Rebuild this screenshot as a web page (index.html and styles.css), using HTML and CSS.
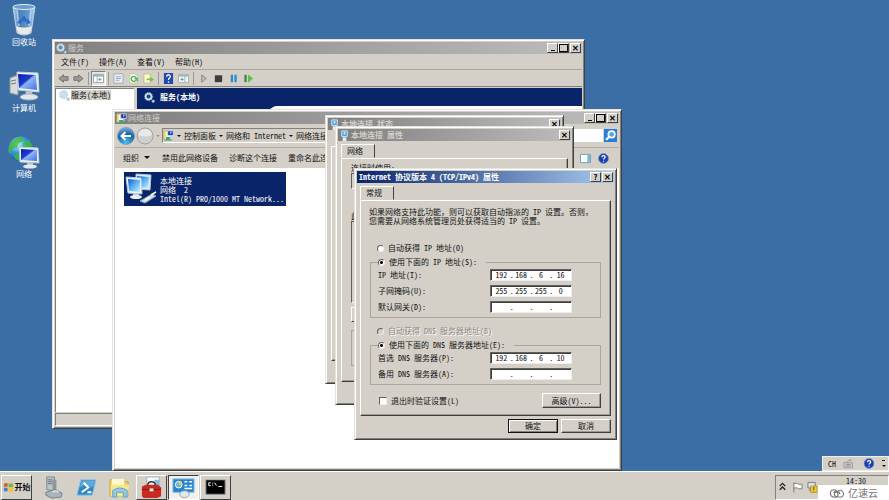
FILE: index.html
```html
<!DOCTYPE html>
<html lang="zh-CN">
<head>
<meta charset="utf-8">
<title>网络连接</title>
<link rel="stylesheet" href="styles.css">
</head>
<body>
<svg class="defs" aria-hidden="true">
  <defs>
    <linearGradient id="screen" x1="0" y1="0" x2="1" y2="1"><stop offset="0" stop-color="#0a1fa8"/><stop offset=".42" stop-color="#1c3cd0"/><stop offset=".5" stop-color="#8fb4f4"/><stop offset="1" stop-color="#3f70e0"/></linearGradient>
    <linearGradient id="sky" x1="0" y1="0" x2="1" y2="1"><stop offset="0" stop-color="#1757d0"/><stop offset=".5" stop-color="#5cb2f6"/><stop offset="1" stop-color="#c8ecff"/></linearGradient>
    <radialGradient id="globe" cx=".35" cy=".3" r=".8"><stop offset="0" stop-color="#d6f3ff"/><stop offset=".4" stop-color="#3f9fe0"/><stop offset="1" stop-color="#0c3f90"/></radialGradient>
    <radialGradient id="back" cx=".5" cy=".9" r=".9"><stop offset="0" stop-color="#49c4f0"/><stop offset=".6" stop-color="#1763ae"/><stop offset="1" stop-color="#7fb1da"/></radialGradient>
    <linearGradient id="bin" x1="0" y1="0" x2="1" y2="0"><stop offset="0" stop-color="#c9e0f2"/><stop offset=".3" stop-color="#4b84c0"/><stop offset=".7" stop-color="#6b9fd3"/><stop offset="1" stop-color="#d6e8f6"/></linearGradient>
    <symbol id="gear" viewBox="0 0 12 12"><circle cx="5" cy="5" r="3.2" fill="#5f8fb5" fill-opacity=".3" stroke="#c4dff2" stroke-width="2"/><circle cx="5" cy="5" r="4.500" fill="none" stroke="#9cc0dc" stroke-dasharray="1.4 1.3"/><circle cx="10" cy="10" r="1.3" fill="#fff" stroke="#7ca8cc"/></symbol>
    <symbol id="netfolder" viewBox="0 0 14 14"><path d="M1 1h7v11H1z" fill="#f3df82" stroke="#b59c45" stroke-width=".6"/><path d="M4 3h5v6H4z" fill="#fff"/><path d="M6 1h7v6H6z" fill="#1838a8" stroke="#cfdcea"/><path d="M9 2h3L9 6z" fill="#8fb5ff"/><path d="M4 9h5v3H4zM2 12h10v1.5H2z" fill="#3fa488"/><path d="M9 8h2v2H9z" fill="#ccd"/></symbol>
    <symbol id="plug" viewBox="0 0 10 12"><path d="M2 1h6v6H2z" fill="#4a9bd8" stroke="#d9efff"/><path d="M4 2h2v3H4z" fill="#c6f0ff"/><path d="M3 8h4v4H3z" fill="#e6eef4"/></symbol>
    <symbol id="help" viewBox="0 0 12 12"><circle cx="6" cy="6" r="5.4" fill="#1d3fae" stroke="#7b96cf" stroke-width=".8"/><path d="M4.2 4.6c0-2.4 3.8-2.3 3.6-.1C7.700 5.700 6 5.600 6 7.200M6 8.400v1.200" fill="none" stroke="#fff" stroke-width="1.300"/></symbol>
  </defs>
</svg>

<main class="desktop">
  <nav class="shortcuts">
    <a href="#bin" class="shortcut">
      <svg viewBox="0 0 32 34"><path d="M5 4l4 26q7 4 14 0l4-26z" fill="url(#bin)" fill-opacity=".85" stroke="#b8d2e8"/><path d="M8 23l2 7q6 3 12 0l2-7q-8 3-16 0z" fill="#ece9df"/><path d="M9 7l2 16M23 7l-2 16" stroke="#d7e9f7" stroke-width="1.500" opacity=".6"/><ellipse cx="16" cy="4" rx="11" ry="2.500" fill="#6d9bca" stroke="#e0edf6"/><path d="M13 18l3-5 3 5zM12 16l-2 4h4M20 16l2 4h-4" fill="#2b6cc9" stroke="#2b6cc9"/></svg>
      <span>回收站</span>
    </a>
    <a href="#computer" class="shortcut">
      <svg viewBox="0 0 32 34"><path d="M2 9l8-3v20l-8-2z" fill="#d8dbdd" stroke="#8f979e"/><path d="M3 12l5-1M3 15l5-1" stroke="#777"/><path d="M9 3l21 1 1 19-21-2z" fill="#e9f1f9" stroke="#c2cfdb"/><path d="M10 5l18 1 1 15-18-2z" fill="url(#screen)"/><path d="M18 22l6 1 1 4h-8z" fill="#bfc8d0"/><ellipse cx="21" cy="28" rx="9" ry="3" fill="#e3e7e9" stroke="#a9b1b8"/></svg>
      <span>计算机</span>
    </a>
    <a href="#network" class="shortcut">
      <svg viewBox="0 0 32 34"><circle cx="13" cy="14" r="12.500" fill="url(#globe)"/><path d="M2 9q4-7 12-7l2 4-5 2-2 5-5 1-2 5-2-3zM15 8l6-3 4 6-5 4-5-2zM6 20l8-2 3 5-4 4-6-3z" fill="#3fbd35" opacity=".8"/><path d="M11 12l19 1 1 15-19-1z" fill="#edf3fa" stroke="#b8c8d8"/><path d="M13 14l16 1v11l-16-1z" fill="url(#screen)"/><path d="M19 28h6v3h-6z" fill="#bcc5cc"/><ellipse cx="22" cy="31.500" rx="7" ry="2" fill="#e6e9eb"/></svg>
      <span>网络</span>
    </a>
  </nav>

  <section class="window services">
    <header class="titlebar"><svg class="ico"><use href="#gear"/></svg><span class="caption">服务</span>
      <button class="ctl min" aria-label="最小化"></button><button class="ctl max" aria-label="最大化"></button><button class="ctl close" aria-label="关闭">✕</button></header>
    <nav class="menubar"><button>文件(F)</button><button>操作(A)</button><button>查看(V)</button><button>帮助(H)</button></nav>
    <div class="toolbar">
      <button aria-label="后退"><svg viewBox="0 0 12 12"><path d="M1 6l5-4v2h5v4H6v2z" fill="#999" stroke="#707070"/></svg></button>
      <button aria-label="前进"><svg viewBox="0 0 12 12"><path d="M11 6L6 2v2H1v4h5v2z" fill="#999" stroke="#707070"/></svg></button>
      <i class="sep"></i>
      <button class="pressed" aria-label="显示树"><svg viewBox="0 0 12 12"><path d="M.5 1.500h11v9H.5z" fill="#fff" stroke="#8d9cab"/><path d="M1 2h10v2H1z" fill="#9fb3c8"/><path d="M4.500 4v6" stroke="#9aa"/><path d="M6 7h3M7.500 5.500v3" stroke="#3aa36b"/></svg></button>
      <i class="sep"></i>
      <button aria-label="属性"><svg viewBox="0 0 12 12"><path d="M1 1h10v10H1z" fill="#edf2f5" stroke="#9aa8b4"/><path d="M3 4h6M3 6h6M3 8h4" stroke="#8ea7bd"/></svg></button>
      <button aria-label="刷新"><svg viewBox="0 0 12 12"><path d="M2 1h6l2 2v8H2z" fill="#fff" stroke="#c4c49b"/><path d="M8.500 8A2.700 2.700 0 1 1 9 6M7 6.500h3V9" fill="none" stroke="#39ab43" stroke-width="1.400"/></svg></button>
      <button aria-label="导出"><svg viewBox="0 0 12 12"><path d="M1 1h7v10H1z" fill="#fdf9d5" stroke="#c7bb83"/><path d="M4 6h4V4l4 3-4 3V8H4z" fill="#75c83c"/></svg></button>
      <i class="sep"></i>
      <button aria-label="帮助"><svg viewBox="0 0 12 12"><path d="M1 0h10v12H1z" fill="#2348b3"/><path d="M4 4c0-3 4-2.500 4-.2C8 5.500 6 5.500 6 7.500M6 9v1.500" fill="none" stroke="#fff" stroke-width="1.400"/></svg></button>
      <button aria-label="视图"><svg viewBox="0 0 12 12"><path d="M.5 1.500h11v9H.5z" fill="#f3f5f6" stroke="#a6afb8"/><path d="M1 2h10v2H1z" fill="#a5b4c2"/><path d="M7.500 4v6" stroke="#aaa"/><path d="M3 7h3M4.500 5.500v3" stroke="#3aa36b"/></svg></button>
      <i class="sep"></i>
      <button aria-label="启动"><svg viewBox="0 0 12 12"><path d="M4 2l5 4-5 4z" fill="#bbb" stroke="#858585"/></svg></button>
      <button aria-label="停止"><svg viewBox="0 0 12 12"><path d="M2 2.500h8v7.500H2z" fill="#3d3d3d"/></svg></button>
      <button aria-label="暂停"><svg viewBox="0 0 12 12"><path d="M3 2h2.500v8H3zM7 2h2.500v8H7z" fill="#2b8ad0"/></svg></button>
      <button aria-label="重新启动"><svg viewBox="0 0 12 12"><path d="M1.500 2H4v8H1.500z" fill="#4c7c4c"/><path d="M5.500 1.500L11 6l-5.500 4.500z" fill="#54c242"/></svg></button>
    </div>
    <div class="panes">
      <div class="tree"><svg class="ico"><use href="#gear"/></svg><span>服务(本地)</span></div>
      <div class="detail"><h2><svg class="ico"><use href="#gear"/></svg>服务(本地)</h2><div class="sheet"></div></div>
    </div>
    <footer class="status"></footer>
  </section>

  <section class="window connections">
    <header class="titlebar"><svg class="ico"><use href="#netfolder"/></svg><span class="caption">网络连接</span>
      <button class="ctl min" aria-label="最小化"></button><button class="ctl max" aria-label="最大化"></button><button class="ctl close" aria-label="关闭">✕</button></header>
    <div class="address">
      <button class="round" aria-label="返回"><svg viewBox="0 0 18 18"><circle cx="9" cy="9" r="8.500" fill="url(#back)" stroke="#7796b5" stroke-width=".7"/><path d="M14 9H5M8.500 5L4.500 9l4 4" fill="none" stroke="#fff" stroke-width="2"/></svg></button>
      <button class="round" aria-label="前进"><svg viewBox="0 0 18 18"><circle cx="9" cy="9" r="8" fill="#cfcfcf" stroke="#a2a2a2"/><path d="M2 8a7 6 0 0 1 14 0q-7 3-14 0z" fill="#e9e9e9"/></svg></button>
      <span class="tri dim"></span>
      <div class="crumbs"><svg class="ico"><use href="#netfolder"/></svg><span class="tri"></span><span>控制面板</span><span class="tri"></span><span>网络和 Internet</span><span class="tri"></span><span>网络连接</span></div>
      <input class="search" type="text" aria-label="搜索">
      <button class="go" aria-label="搜索"><svg viewBox="0 0 12 12"><path d="M0 0h12v12H0z" fill="#287fd5"/><circle cx="7" cy="5" r="3" fill="#4faae8" stroke="#fff" stroke-width="1.500"/><path d="M5 7l-3 3" stroke="#fff" stroke-width="2"/></svg></button>
    </div>
    <nav class="commands"><button>组织 <span class="tri"></span></button><button>禁用此网络设备</button><button>诊断这个连接</button><button>重命名此连接</button>
      <button class="push" aria-label="预览窗格"><svg viewBox="0 0 12 12"><path d="M.5 1.500h11v9H.5z" fill="#fff" stroke="#6a9aa8"/><path d="M8 2h3v8H8z" fill="#6cc3d4"/></svg></button><button aria-label="帮助"><svg><use href="#help"/></svg></button></nav>
    <div class="items">
      <a class="item" href="#local">
        <svg viewBox="0 0 34 32"><path d="M12 1l15 1-1 15-14-1z" fill="#dcecf8" stroke="#acc4da"/><path d="M13 3l12 1-1 11-11-1z" fill="url(#sky)"/><path d="M2 4l15 1 1 16-14-1z" fill="#edf4fa" stroke="#b5cbdf"/><path d="M4 6l12 1v12L5 18z" fill="url(#sky)"/><path d="M9 21h6v3H9z" fill="#c5ced5"/><ellipse cx="12" cy="24" rx="6" ry="2" fill="#e9edef"/><path d="M16 28l12-7 4 2-11 7z" fill="#cfdde8" stroke="#89a3ba"/><path d="M21 27l5-3M27 22l5-3" stroke="#fff" stroke-width="1.500"/></svg>
        <span>本地连接<br>网络&nbsp; 2<br>Intel(R) PRO/1000 MT Network...</span>
      </a>
    </div>
  </section>

  <section class="window state">
    <header class="titlebar"><svg class="ico"><use href="#plug"/></svg><span class="caption">本地连接 状态</span><button class="ctl close" aria-label="关闭">✕</button></header>
    <div class="page"></div>
  </section>

  <section class="window props">
    <header class="titlebar"><svg class="ico"><use href="#plug"/></svg><span class="caption">本地连接 属性</span><button class="ctl close" aria-label="关闭">✕</button></header>
    <button class="tab">网络</button>
    <div class="page"><span>连接时使用:</span><div class="adapter"></div><span>此</span><div class="list"></div><button class="install" aria-label="安装"></button><div class="about"></div></div>
  </section>

  <section class="window tcp">
    <header class="titlebar"><span class="caption">Internet 协议版本 4 (TCP/IPv4) 属性</span><button class="ctl">?</button><button class="ctl close" aria-label="关闭">✕</button></header>
    <button class="tab">常规</button>
    <form class="page">
      <p>如果网络支持此功能，则可以获取自动指派的 IP 设置。否则，<br>您需要从网络系统管理员处获得适当的 IP 设置。</p>
      <label class="choice"><input type="radio" name="ip">自动获得 IP 地址(O)</label>
      <fieldset>
        <legend><label class="choice"><input type="radio" name="ip" checked>使用下面的 IP 地址(S):</label></legend>
        <div class="row"><label for="ip1">IP 地址(I):</label><div class="ip"><input id="ip1" value="192"><b>.</b><input aria-label="IP 2" value="168"><b>.</b><input aria-label="IP 3" value="6"><b>.</b><input aria-label="IP 4" value="16"></div></div>
        <div class="row"><label for="mask1">子网掩码(U):</label><div class="ip"><input id="mask1" value="255"><b>.</b><input aria-label="掩码 2" value="255"><b>.</b><input aria-label="掩码 3" value="255"><b>.</b><input aria-label="掩码 4" value="0"></div></div>
        <div class="row"><label for="gw1">默认网关(D):</label><div class="ip"><input id="gw1"><b>.</b><input aria-label="网关 2"><b>.</b><input aria-label="网关 3"><b>.</b><input aria-label="网关 4"></div></div>
      </fieldset>
      <label class="choice off"><input type="radio" name="dns" disabled>自动获得 DNS 服务器地址(B)</label>
      <fieldset>
        <legend><label class="choice"><input type="radio" name="dns" checked>使用下面的 DNS 服务器地址(E):</label></legend>
        <div class="row"><label for="dns1">首选 DNS 服务器(P):</label><div class="ip"><input id="dns1" value="192"><b>.</b><input aria-label="首选 2" value="168"><b>.</b><input aria-label="首选 3" value="6"><b>.</b><input aria-label="首选 4" value="10"></div></div>
        <div class="row"><label for="alt1">备用 DNS 服务器(A):</label><div class="ip"><input id="alt1"><b>.</b><input aria-label="备用 2"><b>.</b><input aria-label="备用 3"><b>.</b><input aria-label="备用 4"></div></div>
      </fieldset>
      <div class="foot"><label class="choice"><input type="checkbox">退出时验证设置(L)</label><button type="button" class="btn wide">高级(V)...</button></div>
    </form>
    <div class="actions"><button class="btn default">确定</button><button class="btn">取消</button></div>
  </section>

  <div class="langbar"><span>CH</span><svg viewBox="0 0 14 12"><path d="M1 5h10v6H1z" fill="#ccc" stroke="#999"/><path d="M3 7h6M3 9h6M5 4q2-3 5-2" stroke="#888" fill="none"/></svg><svg viewBox="0 0 12 12"><use href="#help"/></svg><span class="more"><i></i><i class="tri"></i></span></div>
</main>

<footer class="taskbar">
  <button class="start"><svg viewBox="0 0 12 12"><path d="M1 3q2-2 4-1v4q-2-1-4 0z" fill="#e55425"/><path d="M6 2q2 1 5 0v4q-3 1-5 0z" fill="#7cb531"/><path d="M1 7q2-1 4 0v4q-2-1-4 0z" fill="#3b83cc"/><path d="M6 7q2 1 5 0v4q-3 1-5 0z" fill="#f5c125"/></svg>开始</button>
  <button class="task flat" aria-label="服务器管理器"><svg viewBox="0 0 24 24"><path d="M5 1h8v15l-8-2z" fill="#bdc4c9" stroke="#7b858d"/><path d="M6 4h5M6 6h5M6 8h5" stroke="#657079"/><path d="M11 4h4v12h-4z" fill="#8c969e"/><path d="M4 17l9-3 8 4-1 4-10 1-6-3z" fill="#aab4bc" stroke="#74808a"/><path d="M11 17q3-3 6 0" fill="none" stroke="#eee" stroke-width="1.500"/></svg></button>
  <button class="task flat" aria-label="PowerShell"><svg viewBox="0 0 24 24"><path d="M6 4h16l-4 16H2z" fill="#2f87c6" stroke="#91c4e5"/><path d="M7 5h14l-2 7Q10 8 5 12z" fill="#79b7e1" opacity=".7"/><path d="M9 7l5 5-7 5M13 17h4" fill="none" stroke="#fff" stroke-width="2"/></svg></button>
  <button class="task flat" aria-label="资源管理器"><svg viewBox="0 0 24 24"><path d="M2 4h7l2 2h10v15H2z" fill="#eed068" stroke="#c6a744"/><path d="M4 3h13v7H4z" fill="#fff7cc"/><path d="M3 9h19l-1 12H3z" fill="#f9e58d"/><path d="M5 22v-7q7-5 15 0v7h-4v-5H9v5z" fill="#90cbe7" stroke="#5c9fc4"/></svg></button>
  <button class="task" aria-label="工具箱"><svg viewBox="0 0 24 24"><path d="M7 1h13v12H7z" fill="#f7f9fb" stroke="#a6b1bc"/><path d="M15 4h5v8h-5z" fill="#7cc1e3"/><path d="M8 10q0-4 4-4t4 4" fill="none" stroke="#333" stroke-width="1.500"/><path d="M2 11l4-2h13l3 3v9l-4 2H4l-2-2z" fill="#c92a20"/><path d="M2 14h20" stroke="#7c1812"/><path d="M10 13h4v3h-4z" fill="#eee"/></svg></button>
  <button class="task on" aria-label="网络连接"><svg viewBox="0 0 24 24"><path d="M1 3h22v14H1z" fill="#2584cb" stroke="#85bde4"/><circle cx="7" cy="9" r="3.500" fill="#62b3e8" stroke="#fff"/><path d="M7 5.500A3.500 3.500 0 0 1 10.500 9H7z" fill="#f4ce4b"/><path d="M13 6h3M18 6h3M13 10h3M18 10h3M13 13h8" stroke="#fff" stroke-width="1.500"/><ellipse cx="13" cy="19" rx="5" ry="3.500" fill="#dfe7eb" stroke="#95a5ae"/></svg></button>
  <button class="task" aria-label="命令提示符"><svg viewBox="0 0 24 24"><path d="M2 4h20v15H2z" fill="#000" stroke="#888"/><path d="M2 3.500h20" stroke="#bbb"/><path d="M7 7H5v3h2M9 7v1M9 9v1M11 7l2 3M15 11h4" fill="none" stroke="#fff"/></svg></button>
  <div class="tray"><svg viewBox="0 0 12 12"><path d="M3 5l3-3 3 3M3 9l3-3 3 3" fill="none" stroke="#222" stroke-width="1.400"/></svg><svg viewBox="0 0 12 12"><path d="M2 1v11M2 2h4l1 1h4v5H7L6 7H2" fill="#f8f8f8" stroke="#777"/></svg><svg viewBox="0 0 12 12"><path d="M1 1h8v6H1zM3 8h6v2H3z" fill="#dbe0e4" stroke="#777"/><path d="M4 5h7v7H4z" fill="#f2cc35" stroke="#98771b" stroke-width=".6"/><path d="M7.500 6v3M7.500 10v1" stroke="#333"/></svg><time>14:30</time></div>
  <div class="brand"><svg viewBox="0 0 20 14"><path d="M6 12a4 4 0 1 1 3-6M9 6a4 4 0 1 1 5 6H9a3 3 0 1 1 3-3M6 12a3 3 0 1 0-1-5" fill="none" stroke="#777" stroke-width="1.200"/></svg>亿速云</div>
</footer>
</body>
</html>
```
FILE: styles.css
```css
* { box-sizing: border-box; }
html, body { height: 100%; }
body {
  margin: 0;
  display: flex;
  flex-direction: column;
  overflow: hidden;
  color: #111;
  font: 8px/10px "Noto Sans Mono CJK SC", "Noto Sans CJK SC", sans-serif;
}
button, input { font: inherit; color: inherit; margin: 0; padding: 0; border: 0; background: none; border-radius: 0; }
button { white-space: nowrap; }
a { color: inherit; text-decoration: none; }
.defs { position: absolute; width: 0; height: 0; }
.ico { width: 11px; height: 11px; flex: none; }
.tri { display: inline-block; border: 2px solid transparent; border-top-color: #111; border-bottom: 0; flex: none; }
.dim { border-top-color: #999; }

.desktop { position: relative; flex: 1; background: #3a6ea5; overflow: hidden; }
.shortcuts { display: flex; flex-direction: column; gap: 22px; width: 48px; padding-top: 3px; color: #fff; }
.shortcut { display: flex; flex-direction: column; align-items: center; }
.shortcut svg { width: 32px; height: 34px; }

/* Windows */
.window {
  position: absolute;
  display: flex;
  flex-direction: column;
  padding: 2px;
  background: #d4d0c8;
  border: 1px solid;
  border-color: #e6e3dc #404040 #404040 #e6e3dc;
  box-shadow: inset 1px 1px #fff, inset -1px -1px #808080;
}
.services { left: 52px; top: 39px; width: 533px; height: 390px; }
.connections { left: 112px; top: 109px; width: 510px; height: 362px; }
.state { left: 325px; top: 115px; width: 239px; height: 269px; }
.props { left: 335px; top: 126px; width: 239px; height: 279px; }
.tcp { left: 354px; top: 168px; width: 263px; height: 272px; }

.titlebar {
  display: flex;
  align-items: center;
  flex: none;
  height: 12px;
  padding: 0 1px;
  color: #d4d0c8;
  font-weight: bold;
  background: linear-gradient(90deg, #808080, #bcbcbc);
}
.services .caption, .connections .caption { font-weight: normal; }
.caption { flex: 1; padding-left: 1px; white-space: nowrap; }
.tcp .titlebar { color: #fff; background: linear-gradient(90deg, #0a246a, #a6caf0); }
.ctl {
  display: grid;
  place-items: center;
  width: 11px;
  height: 10px;
  color: #000;
  font-weight: bold;
  line-height: 8px;
  background: #d4d0c8;
  border: 1px solid;
  border-color: #fff #404040 #404040 #fff;
}
.close { margin-left: 1px; }
.min::before { content: ""; width: 4px; height: 1px; margin-top: 5px; background: #000; }
.max::before { content: ""; width: 7px; height: 6px; border: 1px solid #000; }

/* Services */
.menubar { display: flex; align-items: center; flex: none; height: 16px; gap: 10px; padding: 1px 0 0 6px; border-bottom: 1px solid #aaa69e; }
.toolbar { display: flex; align-items: center; flex: none; height: 17px; padding-left: 1px; border-bottom: 1px solid #808080; }
.toolbar button { display: grid; place-items: center; width: 15px; height: 15px; }
.toolbar svg { width: 11px; height: 11px; }
.toolbar .pressed { border: 1px solid; border-color: #808080 #fff #fff #808080; background: #ece9e4; }
.sep { width: 1px; height: 13px; margin: 0 2px; background: #999; }
.panes { display: flex; flex: 1; gap: 3px; padding-top: 1px; }
.tree { display: flex; align-items: flex-start; gap: 1px; width: 79px; padding: 1px 3px; background: #fff; border: 1px solid #808080; border-width: 1px 0 0 1px; }
.tree span { background: #d4d0c8; }
.detail { display: flex; flex-direction: column; flex: 1; background: #0a246a; }
.detail h2 { display: flex; align-items: center; gap: 5px; flex: none; height: 18px; margin: 0; padding-left: 7px; color: #fff; font-size: 8px; }
.sheet { flex: 1; margin-left: 132px; background: #fff; border-top-left-radius: 8px; }
.status { flex: none; height: 13px; margin-top: 1px; border: 1px solid; border-color: #808080 #fff #fff #808080; }

/* Network connections */
.address { display: flex; align-items: center; flex: none; height: 24px; padding: 0 2px; gap: 1px; border-bottom: 1px solid #b0aca4; }
.round, .round svg { width: 18px; height: 18px; }
.address > .dim { margin: 0 1px; }
.crumbs { display: flex; align-items: center; flex: 1; gap: 3px; height: 15px; border: 1px solid; border-color: #808080 #fff #fff #808080; }
.search { width: 90px; height: 13px; background: #fff; }
.go, .go svg { display: block; width: 13px; height: 13px; }
.commands { display: flex; align-items: center; flex: none; height: 20px; gap: 11px; padding: 0 10px 0 8px; }
.commands svg { display: block; width: 11px; height: 11px; }
.commands .tri { margin: 0 1px 2px; border-width: 3px 3px 0; }
.commands .push { margin-left: auto; }
.commands button:last-child { margin-left: -4px; }
.items { flex: 1; padding: 4px 9px; background: #fff; }
.item { display: flex; align-items: center; gap: 2px; width: 162px; height: 34px; color: #fff; line-height: 9px; background: #0a246a; white-space: nowrap; }
.item svg { width: 34px; height: 32px; }

/* Dialogs */
.tab {
  align-self: flex-start;
  flex: none;
  width: 34px;
  height: 14px;
  margin: 3px 0 0 3px;
  text-align: left;
  padding-left: 5px;
  border: 1px solid;
  border-color: #fff #404040 transparent #fff;
}
.page {
  flex: 1;
  margin: 0 3px;
  border: 1px solid;
  border-color: #fff #404040 #404040 #fff;
  box-shadow: inset -1px -1px #a09c94;
}
.state .page { margin: 16px 3px 20px; }
.props .page { display: flex; flex-direction: column; margin-bottom: 20px; padding: 4px 9px; }
.props .page > * { flex: none; }
.adapter { height: 16px; border: 1px solid; border-color: #606060 #fff #fff #606060; margin-bottom: 22px; }
.list { height: 82px; border: 1px solid; border-color: #606060 #fff #fff #606060; }
.install { width: 60px; height: 15px; margin: 4px 0 8px; border: 1px solid; border-color: #fff #404040 #404040 #fff; }
.about { height: 36px; border: 1px solid #aaa69e; }

.tcp .page { display: flex; flex-direction: column; padding: 6px 9px 6px 8px; }
.tcp p { margin: 0 0 18px; line-height: 9px; white-space: nowrap; }
.choice { display: flex; align-items: center; gap: 4px; white-space: nowrap; }
.tcp .page > .choice { padding-left: 8px; }
.choice input { appearance: none; flex: none; width: 7px; height: 7px; background: #fff; border: 1px solid; border-color: #606060 #eee #eee #606060; }
.choice input[type="radio"] { border-radius: 50%; }
.choice input[type="radio"]:checked { background: radial-gradient(#000 0 1px, #fff 2px); }
.choice input[type="checkbox"] { width: 8px; height: 8px; }
.off { color: #8c8880; text-shadow: 1px 1px #fff; }
.off input { background: #d4d0c8; }
fieldset { min-width: 0; margin: 4px 0 8px 1px; padding: 2px 28px 4px 7px; border: 1px solid #aaa69e; }
legend { padding: 0 9px 0 0; }
.row { display: flex; align-items: center; justify-content: space-between; height: 12px; }
.row + .row { margin-top: 4px; }
.ip { display: flex; width: 82px; height: 12px; padding: 0 2px; background: #fff; border: 1px solid; border-color: #606060 #eee #eee #606060; box-shadow: inset 1px 1px #404040; }
.ip input { flex: 1; width: 0; min-width: 0; text-align: center; line-height: 10px; }
.ip b { width: 3px; text-align: center; font-weight: normal; line-height: 10px; }
.foot { display: flex; align-items: center; justify-content: space-between; padding-left: 10px; }
.btn { width: 50px; height: 14px; border: 1px solid; border-color: #fff #404040 #404040 #fff; box-shadow: inset -1px -1px #999; }
.wide { width: 59px; height: 15px; }
.default { border-color: #111; box-shadow: inset 1px 1px #fff, inset -1px -1px #808080; }
.actions { display: flex; justify-content: flex-end; gap: 3px; flex: none; padding: 3px 3px 4px; }

/* Taskbar */
.langbar { position: absolute; right: 0; bottom: 0; display: flex; align-items: center; justify-content: space-between; width: 67px; height: 15px; padding: 0 2px 0 5px; background: #d4d0c8; border: 1px solid #eee; }
.langbar svg { width: 12px; height: 11px; }
.more { display: flex; flex-direction: column; gap: 4px; align-items: center; }
.more i:first-child { width: 3px; height: 1px; background: #111; }
.taskbar { position: relative; display: flex; align-items: center; flex: none; height: 29px; padding: 2px 0 0 1px; background: #d4d0c8; border-top: 1px solid #fff; }
.start, .task { display: flex; align-items: center; justify-content: center; height: 25px; border: 1px solid; border-color: #fff #404040 #404040 #fff; }
.start { width: 31px; gap: 1px; margin-right: 5px; font-weight: bold; }
.start svg { width: 11px; height: 12px; }
.task { width: 31px; margin-right: 1px; }
.task svg { width: 23px; height: 23px; }
.flat { width: 32px; border-color: transparent; }
.on { background: #f2f0ed; border-color: #404040 #fff #fff #404040; }
.tray { display: flex; align-items: center; gap: 4px; width: 114px; height: 25px; margin-left: auto; padding: 0 22px 0 1px; border: 1px solid; border-color: #808080 #fff #fff #808080; }
.tray svg { width: 11px; height: 12px; }
.tray time { align-self: flex-start; margin-left: auto; line-height: 10px; }
.brand { position: absolute; right: 0; bottom: 0; display: flex; align-items: center; justify-content: center; gap: 1px; width: 71px; height: 15px; color: #777; background: #fff; font-size: 10px; }
.brand svg { width: 18px; height: 13px; }
```
